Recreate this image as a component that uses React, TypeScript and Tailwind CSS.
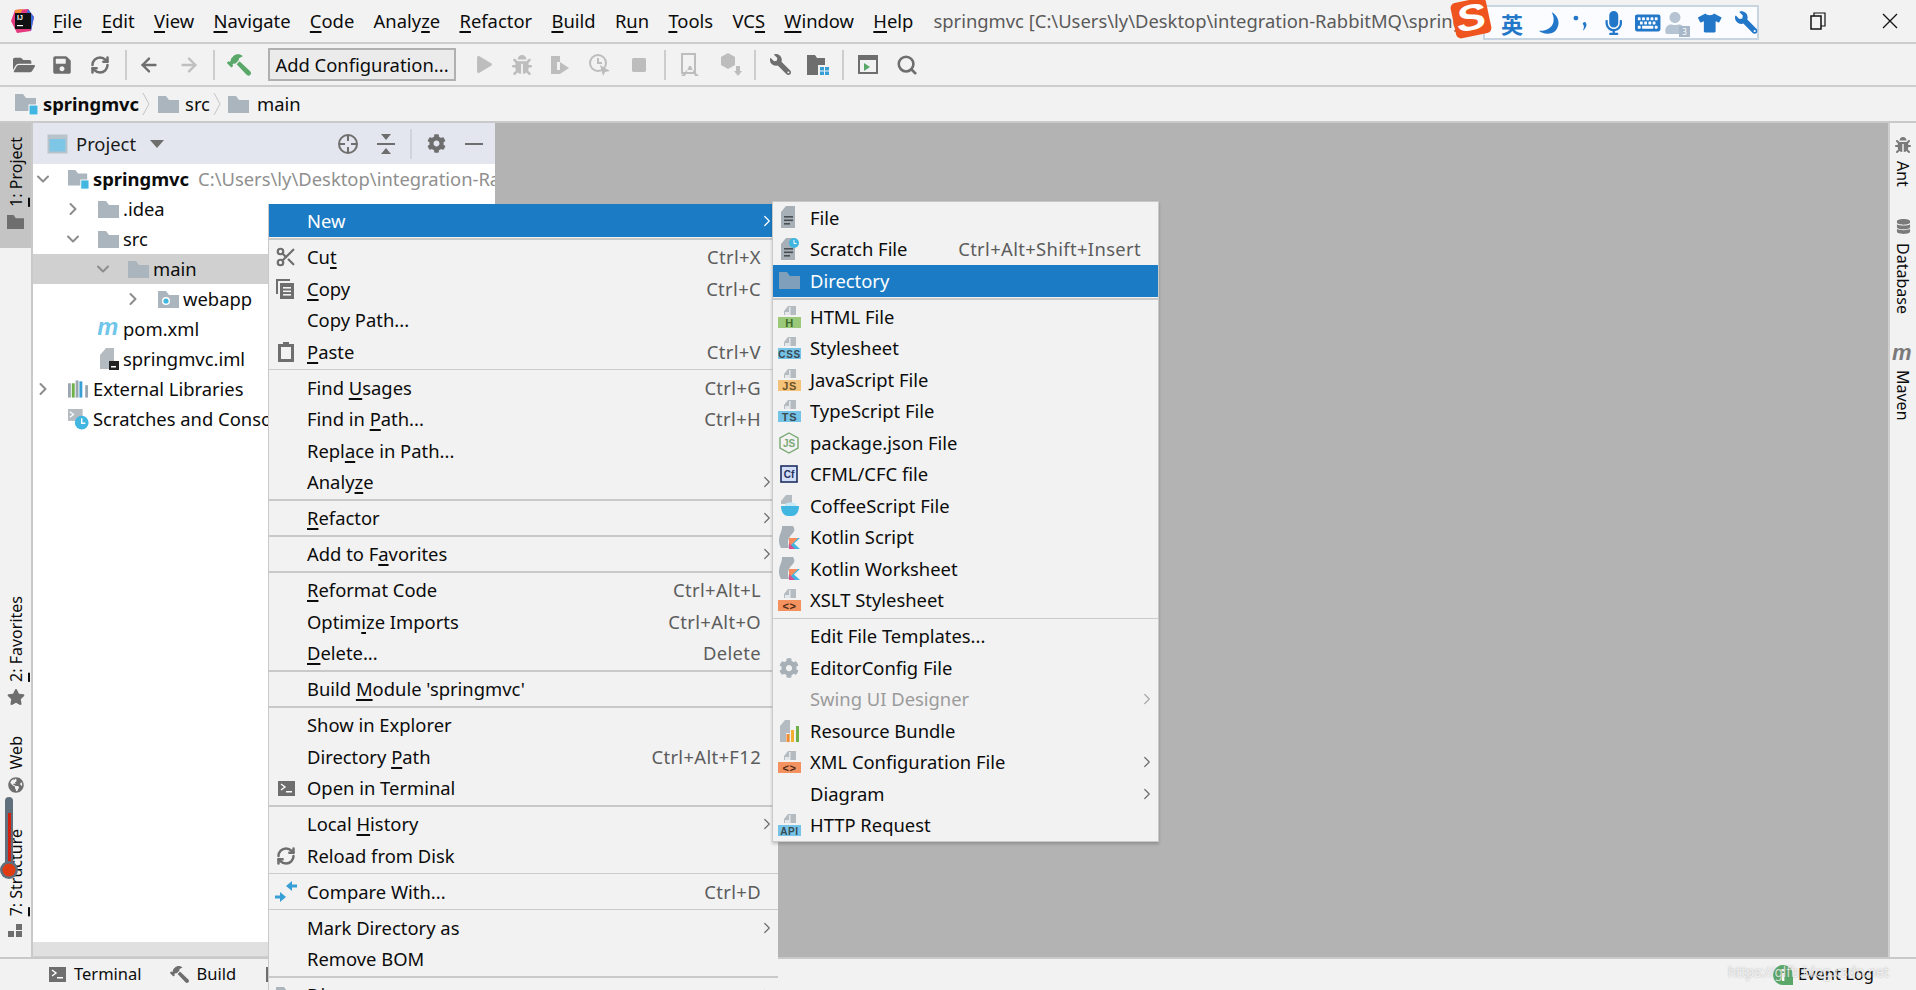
import type { ReactNode } from "react";
import { ArrowLeft, ArrowRight, ChevronDown, ChevronRight, RefreshCw, Scissors, Search } from "lucide-react";
import {
  FaBug,
  FaCog,
  FaDatabase,
  FaFolderOpen,
  FaGlobeAmericas,
  FaHammer,
  FaKeyboard,
  FaMicrophone,
  FaPlay,
  FaSave,
  FaStar,
  FaStop,
  FaTshirt,
  FaUser,
  FaWrench,
} from "react-icons/fa";

type MenuRow = {
  label?: string;
  m?: number;
  sc?: string;
  arrow?: boolean;
  icon?: ReactNode;
  active?: boolean;
  disabled?: boolean;
  sep?: "thin" | "thick";
  tall?: boolean;
};

const Folder = ({ color = "#aab5bd", w = 21, h = 17 }: { color?: string; w?: number; h?: number }) => (
  <svg width={w} height={h} viewBox="0 0 21 17">
    <path d="M0 0H8L11 4H21V17H0Z" fill={color} />
  </svg>
);

const ModuleFolder = () => (
  <svg width="23" height="21" viewBox="0 0 23 21">
    <path d="M0 0H8L11 4H21V17H0Z" fill="#aab5bd" />
    <rect x="14" y="11" width="9" height="10" fill="#40b6e0" stroke="#fff" strokeWidth="1" />
  </svg>
);

const BadgeFile = ({ color, label, ink = "#3a4a52" }: { color: string; label: string; ink?: string }) => (
  <svg width="23" height="22" viewBox="0 0 23 22">
    <path d="M6 9V5L10 0H18V9Z" fill="#b4bcc2" />
    <path d="M7 9V6H11V1H12.5V9Z" fill="#e4e7e9" />
    <rect x="0" y="11" width="23" height="11" fill={color} />
    <text x="11.5" y="20.5" textAnchor="middle" fontSize={label.length > 2 ? 10 : 11} fontWeight="700" letterSpacing="0.6" fill={ink} fontFamily="Liberation Sans, sans-serif">
      {label}
    </text>
  </svg>
);

const PageIcon = ({ clock }: { clock?: boolean }) => (
  <svg width="20" height="23" viewBox="0 0 20 23">
    <path d="M2 6L7 0H16V22H2Z" fill="#a7b0b6" />
    <rect x="5" y="10" width="9" height="1.6" fill="#4a4f52" />
    <rect x="5" y="13.5" width="9" height="1.6" fill="#4a4f52" />
    <rect x="5" y="17" width="6" height="1.6" fill="#4a4f52" />
    {clock && (
      <>
        <circle cx="15" cy="5" r="5" fill="#40b6e0" />
        <path d="M15 2V5.5H17.5" stroke="#fff" strokeWidth="1" fill="none" />
      </>
    )}
  </svg>
);

const CopyIcon = () => (
  <svg width="20" height="20" viewBox="0 0 20 20">
    <path d="M0 0H14V2H2V15H0Z" fill="#6e6e6e" />
    <rect x="4" y="4" width="14" height="16" fill="#6e6e6e" />
    <rect x="7" y="8" width="8" height="1.6" fill="#f2f2f2" />
    <rect x="7" y="11.5" width="8" height="1.6" fill="#f2f2f2" />
    <rect x="7" y="15" width="8" height="1.6" fill="#f2f2f2" />
  </svg>
);

const PasteIcon = () => (
  <svg width="16" height="20" viewBox="0 0 16 20">
    <path d="M5 0H11V2H16V20H0V2H5Z" fill="#6e6e6e" />
    <rect x="3" y="5" width="10" height="12" fill="#f2f2f2" />
  </svg>
);

const TerminalIcon = () => (
  <svg width="17" height="15" viewBox="0 0 17 15">
    <rect width="17" height="15" fill="#6e6e6e" />
    <path d="M3 3L7 6L3 9" stroke="#fff" strokeWidth="1.4" fill="none" />
    <rect x="8" y="10" width="6" height="1.5" fill="#fff" />
  </svg>
);

const CompareIcon = () => (
  <svg width="22" height="21" viewBox="0 0 22 21">
    <path d="M11 5L17 0V3.5H22V6.5H17V10Z" fill="#389fd6" />
    <path d="M11 16L5 21V17.5H0V14.5H5V11Z" fill="#389fd6" />
  </svg>
);

const PackageJsonIcon = () => (
  <svg width="20" height="22" viewBox="0 0 20 22">
    <path d="M10 1L19 6V16L10 21L1 16V6Z" fill="none" stroke="#7aa874" strokeWidth="1.4" />
    <text x="10" y="15" textAnchor="middle" fontSize="10" fontWeight="700" fill="#7aa874" fontFamily="Liberation Sans, sans-serif">
      JS
    </text>
  </svg>
);

const CfIcon = () => (
  <svg width="18" height="18" viewBox="0 0 18 18">
    <rect x="1" y="1" width="16" height="16" fill="#d3dffa" stroke="#1f2f5f" strokeWidth="1.6" />
    <text x="9" y="13" textAnchor="middle" fontSize="10" fontWeight="700" fill="#1f2f5f" fontFamily="Liberation Sans, sans-serif">
      Cf
    </text>
  </svg>
);

const CoffeeIcon = () => (
  <svg width="22" height="22" viewBox="0 0 22 22">
    <path d="M3 6L8 0H14V9H3Z" fill="#b4bcc2" />
    <path d="M3 11H21C21 17 18 21 14 21H10C6 21 3 17 3 11Z" fill="#40b6e0" />
    <path d="M7 9C10 7 15 7 18 9V11H7Z" fill="#c8e9f5" />
  </svg>
);

const KotlinIcon = () => (
  <svg width="22" height="23" viewBox="0 0 22 23">
    <path d="M4 0H15C17 3 17 5 14 8C10 12 9 16 11 22H3C-1 15 2 9 3 6C4 3 4 2 4 0Z" fill="#a7b0b6" />
    <path d="M11 23V12H22L16 17.5L22 23Z" fill="#40b6e0" />
    <path d="M11 12H20L11 21Z" fill="#f98b5d" />
    <path d="M11 23V17L14 20L17 23Z" fill="#d74f8f" />
  </svg>
);

const ResourceIcon = () => (
  <svg width="22" height="22" viewBox="0 0 22 22">
    <path d="M2 6L7 0H12V22H2Z" fill="#b4bcc2" />
    <rect x="8" y="13" width="3.5" height="9" fill="#f2f2f2" />
    <rect x="8.5" y="14" width="3" height="8" fill="#f28c2e" />
    <rect x="13" y="10" width="3" height="12" fill="#f2b02e" />
    <rect x="18" y="6" width="3" height="16" fill="#6fb04a" />
  </svg>
);

const IntellijLogo = () => (
  <svg width="23" height="24" viewBox="0 0 23 24">
    <path d="M4 1L17 0L23 8L20 22L6 24L0 12Z" fill="#e5397f" />
    <path d="M4 1L12 0L4 14Z" fill="#f48c3a" />
    <path d="M17 0L23 8L20 22L14 10Z" fill="#3a6fe0" />
    <rect x="4" y="4" width="16" height="16" fill="#111" />
    <text x="6" y="11" fontSize="7" fontWeight="700" fill="#fff" fontFamily="Liberation Sans, sans-serif">
      IJ
    </text>
    <rect x="6" y="16" width="6" height="1.2" fill="#fff" />
  </svg>
);

const mainMenu: MenuRow[] = [
  { label: "New", arrow: true, active: true, tall: true },
  { sep: "thick" },
  { label: "Cut", m: 2, sc: "Ctrl+X", icon: <Scissors size={22} color="#6e6e6e" strokeWidth={2.4} /> },
  { label: "Copy", m: 0, sc: "Ctrl+C", icon: <CopyIcon /> },
  { label: "Copy Path..." },
  { label: "Paste", m: 0, sc: "Ctrl+V", icon: <PasteIcon /> },
  { sep: "thin" },
  { label: "Find Usages", m: 5, sc: "Ctrl+G" },
  { label: "Find in Path...", m: 8, sc: "Ctrl+H" },
  { label: "Replace in Path...", m: 4 },
  { label: "Analyze", m: 5, arrow: true },
  { sep: "thick" },
  { label: "Refactor", m: 0, arrow: true },
  { sep: "thick" },
  { label: "Add to Favorites", m: 8, arrow: true },
  { sep: "thick" },
  { label: "Reformat Code", m: 0, sc: "Ctrl+Alt+L" },
  { label: "Optimize Imports", m: 5, sc: "Ctrl+Alt+O" },
  { label: "Delete...", m: 0, sc: "Delete" },
  { sep: "thick" },
  { label: "Build Module 'springmvc'", m: 6 },
  { sep: "thick" },
  { label: "Show in Explorer" },
  { label: "Directory Path", m: 10, sc: "Ctrl+Alt+F12" },
  { label: "Open in Terminal", icon: <TerminalIcon /> },
  { sep: "thick" },
  { label: "Local History", m: 6, arrow: true },
  { label: "Reload from Disk", icon: <RefreshCw size={20} color="#6e6e6e" strokeWidth={3} /> },
  { sep: "thin" },
  { label: "Compare With...", sc: "Ctrl+D", icon: <CompareIcon /> },
  { sep: "thin" },
  { label: "Mark Directory as", arrow: true },
  { label: "Remove BOM" },
  { sep: "thick" },
  { label: "Diagrams", arrow: true, icon: <Folder /> },
];

const subMenu: MenuRow[] = [
  { label: "File", icon: <PageIcon /> },
  { label: "Scratch File", sc: "Ctrl+Alt+Shift+Insert", icon: <PageIcon clock /> },
  { label: "Directory", active: true, icon: <Folder color="#7f9fbb" /> },
  { sep: "thick" },
  { label: "HTML File", icon: <BadgeFile color="#9ac97a" label="H" ink="#3d6b2c" /> },
  { label: "Stylesheet", icon: <BadgeFile color="#75c4e8" label="CSS" /> },
  { label: "JavaScript File", icon: <BadgeFile color="#f5c27a" label="JS" ink="#6b5127" /> },
  { label: "TypeScript File", icon: <BadgeFile color="#75c4e8" label="TS" /> },
  { label: "package.json File", icon: <PackageJsonIcon /> },
  { label: "CFML/CFC file", icon: <CfIcon /> },
  { label: "CoffeeScript File", icon: <CoffeeIcon /> },
  { label: "Kotlin Script", icon: <KotlinIcon /> },
  { label: "Kotlin Worksheet", icon: <KotlinIcon /> },
  { label: "XSLT Stylesheet", icon: <BadgeFile color="#f3915f" label="<>" ink="#4a2a18" /> },
  { sep: "thin" },
  { label: "Edit File Templates..." },
  { label: "EditorConfig File", icon: <FaCog size={20} color="#a7b0b6" /> },
  { label: "Swing UI Designer", disabled: true, arrow: true },
  { label: "Resource Bundle", icon: <ResourceIcon /> },
  { label: "XML Configuration File", arrow: true, icon: <BadgeFile color="#f3915f" label="<>" ink="#4a2a18" /> },
  { label: "Diagram", arrow: true },
  { label: "HTTP Request", icon: <BadgeFile color="#75c4e8" label="API" /> },
];

// puts the underline under the mnemonic letter
const Mnemonic = ({ text, at }: { text: string; at?: number }) => {
  if (at === undefined) return <>{text}</>;
  return (
    <>
      {text.slice(0, at)}
      <span className="underline decoration-[1.5px] underline-offset-[3px]">{text[at]}</span>
      {text.slice(at + 1)}
    </>
  );
};

const Menu = ({ rows, slot, labelGap }: { rows: MenuRow[]; slot: string; labelGap: string }) => (
  <>
    {rows.map((row, i) => {
      if (row.sep) {
        return (
          <div key={i} className="h-[4.5px] flex items-center">
            <div className={row.sep === "thick" ? "h-[2px] w-full bg-[#c9c9c9]" : "h-px w-full bg-[#cbcbcb]"} />
          </div>
        );
      }
      const tone = row.active ? "bg-[#1b7bc4] text-white" : row.disabled ? "text-[#9b9b9b]" : "text-[#0c0c0c]";
      return (
        <div key={i} className={`flex items-center ${row.tall ? "h-[33px]" : "h-[31.5px]"} ${tone}`}>
          <div className={`${slot} flex items-center justify-center shrink-0`}>{row.icon}</div>
          <span className={`${labelGap} whitespace-nowrap`}>
            <Mnemonic text={row.label ?? ""} at={row.m} />
          </span>
          {row.sc && <span className="ml-auto mr-[17px] text-[#5c5c5c] tracking-[0.35px] whitespace-nowrap">{row.sc}</span>}
          {row.arrow && (
            <ChevronRight size={18} strokeWidth={1.6} color={row.active ? "#ffffff" : row.disabled ? "#a8a8a8" : "#6e6e6e"} className="ml-auto mr-[2px]" />
          )}
        </div>
      );
    })}
  </>
);

const menuBar: [string, number][] = [
  ["File", 0],
  ["Edit", 0],
  ["View", 0],
  ["Navigate", 0],
  ["Code", 0],
  ["Analyze", 5],
  ["Refactor", 0],
  ["Build", 0],
  ["Run", 1],
  ["Tools", 0],
  ["VCS", 2],
  ["Window", 0],
  ["Help", 0],
];

const TitleBar = () => (
  <div className="h-[42px] flex items-center shrink-0 bg-[#f2f2f2]">
    <div className="w-[53px] pl-[11px] shrink-0">
      <IntellijLogo />
    </div>
    <div className="flex gap-[19.3px] text-[#0c0c0c]">
      {menuBar.map(([name, m]) => (
        <span key={name}>
          <Mnemonic text={name} at={m} />
        </span>
      ))}
    </div>
    <span className="ml-[20px] w-[525px] overflow-hidden whitespace-nowrap text-[#5a5a5a]">
      springmvc [C:\Users\ly\Desktop\integration-RabbitMQ\springmvc] - IntelliJ IDEA
    </span>
    <div className="ml-auto flex items-center">
      <svg width="16" height="18" viewBox="0 0 16 18" className="mr-[56px]">
        <rect x="1" y="4" width="10" height="13" fill="none" stroke="#111" strokeWidth="1.5" />
        <path d="M4 4V1H15V14H11" fill="none" stroke="#111" strokeWidth="1.2" />
      </svg>
      <svg width="16" height="16" viewBox="0 0 16 16" className="mr-[18px]">
        <path d="M1 1L15 15M15 1L1 15" stroke="#111" strokeWidth="1.3" />
      </svg>
    </div>
  </div>
);

const ToolSep = ({ cls }: { cls: string }) => <div className={`w-[2px] h-[30px] bg-[#cdcdcd] shrink-0 ${cls}`} />;

const Tool = ({ w, children }: { w: string; children: ReactNode }) => (
  <div className={`${w} flex items-center justify-center shrink-0`}>{children}</div>
);

const Toolbar = () => (
  <div className="h-[41px] flex items-center pl-[5px] shrink-0 bg-[#f2f2f2] border-t-[2px] border-b-[2px] border-[#cdcdcd] box-content">
    <Tool w="w-[38px]"><FaFolderOpen size={22} color="#6e6e6e" /></Tool>
    <Tool w="w-[38px]"><FaSave size={20} color="#6e6e6e" /></Tool>
    <Tool w="w-[38px]"><RefreshCw size={20} color="#6e6e6e" strokeWidth={3} /></Tool>
    <ToolSep cls="mx-[6px]" />
    <Tool w="w-[32px]"><ArrowLeft size={22} color="#6e6e6e" strokeWidth={2.6} /></Tool>
    <Tool w="w-[48px]"><ArrowRight size={22} color="#c0c0c0" strokeWidth={2.6} /></Tool>
    <ToolSep cls="" />
    <Tool w="w-[48px]"><FaHammer size={24} color="#59a869" className="-scale-x-100" /></Tool>
    <div className="ml-[5px] w-[188px] h-[33px] border-2 border-[#b0b0b0] bg-[#ebebeb] flex items-center justify-center text-[#0c0c0c] shrink-0">
      Add Configuration...
    </div>
    <div className="w-[9px] shrink-0" />
    <Tool w="w-[38px]"><FaPlay size={17} color="#bdbdbd" /></Tool>
    <Tool w="w-[38px]"><FaBug size={20} color="#bdbdbd" /></Tool>
    <Tool w="w-[38px]">
      <svg width="22" height="22" viewBox="0 0 22 22">
        <path d="M2 2H11V8H8V16H11V20H2Z" fill="#bdbdbd" />
        <path d="M11 8L20 14L11 20Z" fill="#bdbdbd" />
      </svg>
    </Tool>
    <Tool w="w-[42px]">
      <svg width="24" height="24" viewBox="0 0 24 24">
        <circle cx="10" cy="10" r="8" fill="none" stroke="#bdbdbd" strokeWidth="2" />
        <path d="M10 5V10H14" stroke="#bdbdbd" strokeWidth="2" fill="none" />
        <path d="M12 12L22 18L17 19L15 23Z" fill="#bdbdbd" />
      </svg>
    </Tool>
    <Tool w="w-[36px]"><FaStop size={16} color="#bdbdbd" /></Tool>
    <ToolSep cls="ml-[7px]" />
    <Tool w="w-[47px]">
      <svg width="22" height="24" viewBox="0 0 22 24">
        <rect x="3" y="1" width="13" height="19" fill="none" stroke="#bdbdbd" strokeWidth="2" />
        <path d="M6 23L10 13L12 13L16 23H20L14 17H8L2 23Z" fill="#bdbdbd" />
      </svg>
    </Tool>
    <Tool w="w-[36px]">
      <svg width="22" height="24" viewBox="0 0 22 24">
        <path d="M8 0L15 4V12L8 16L1 12V4Z" fill="#bdbdbd" />
        <path d="M16 13H20V18H22L18 23L14 18H16Z" fill="#bdbdbd" />
      </svg>
    </Tool>
    <ToolSep cls="ml-[5px]" />
    <Tool w="w-[48px]"><FaWrench size={21} color="#6e6e6e" className="-scale-x-100" /></Tool>
    <Tool w="w-[28px]">
      <svg width="22" height="20" viewBox="0 0 22 20">
        <path d="M0 0H8L10 3H18V10H11V20H0Z" fill="#6e6e6e" />
        <rect x="13" y="12" width="4" height="3.5" fill="#389fd6" />
        <rect x="18" y="12" width="4" height="3.5" fill="#389fd6" />
        <rect x="13" y="16.5" width="4" height="3.5" fill="#389fd6" />
        <rect x="18" y="16.5" width="4" height="3.5" fill="#389fd6" />
      </svg>
    </Tool>
    <ToolSep cls="ml-[10px]" />
    <Tool w="w-[48px]">
      <svg width="20" height="19" viewBox="0 0 20 19">
        <rect x="1" y="1" width="18" height="17" fill="none" stroke="#6e6e6e" strokeWidth="2" />
        <rect x="1" y="1" width="18" height="4" fill="#6e6e6e" />
        <path d="M6 8L12 12L6 16Z" fill="#59a869" />
      </svg>
    </Tool>
    <Tool w="w-[30px]"><Search size={22} color="#6e6e6e" strokeWidth={2.8} /></Tool>
  </div>
);

const CrumbSep = () => (
  <svg width="8" height="24" viewBox="0 0 8 24" className="shrink-0">
    <path d="M1 1L7 12L1 23" fill="none" stroke="#c4c4c4" strokeWidth="1" />
  </svg>
);

const Breadcrumb = () => (
  <div className="h-[34px] flex items-center pl-[15px] shrink-0 bg-[#f2f2f2] text-[#0c0c0c]">
    <ModuleFolder />
    <span className="ml-[5px] font-bold">springmvc</span>
    <div className="ml-[3px] mr-[8px]"><CrumbSep /></div>
    <Folder />
    <span className="ml-[6px]">src</span>
    <div className="ml-[3px] mr-[7px]"><CrumbSep /></div>
    <Folder />
    <span className="ml-[8px]">main</span>
  </div>
);

const ToolTabLeft = ({ text, m, icon, cls }: { text: string; m?: number; icon: ReactNode; cls?: string }) => (
  <div className={`flex flex-col items-center ${cls ?? ""}`}>
    <span className="[writing-mode:vertical-rl] rotate-180 text-[16px] text-[#0c0c0c] whitespace-nowrap leading-none">
      <Mnemonic text={text} at={m} />
    </span>
    <div className="mt-[6px] h-[18px] flex items-center">{icon}</div>
  </div>
);

const LeftStrip = () => (
  <div className="w-[33px] shrink-0 bg-[#f2f2f2] border-r-[2px] border-[#c9c9c9] flex flex-col justify-between">
    <div className="h-[125px] bg-[#c4c4c4] pt-[14px]">
      <ToolTabLeft text="1: Project" m={0} icon={<Folder color="#6e6e6e" w={17} h={14} />} />
    </div>
    <div className="pb-[17px] flex flex-col">
      <ToolTabLeft text="2: Favorites" m={0} icon={<FaStar size={18} color="#6e6e6e" />} />
      <ToolTabLeft text="Web" icon={<FaGlobeAmericas size={16} color="#6e6e6e" />} cls="mt-[30px]" />
      <ToolTabLeft
        text="7: Structure"
        m={0}
        cls="mt-[35px]"
        icon={
          <svg width="15" height="14" viewBox="0 0 15 14">
            <rect x="8" y="0" width="6" height="6" fill="#6e6e6e" />
            <rect x="0" y="7" width="6" height="6" fill="#6e6e6e" />
            <rect x="8" y="7" width="6" height="6" fill="#6e6e6e" />
          </svg>
        }
      />
    </div>
  </div>
);

const TreeRow = ({
  pad,
  open,
  icon,
  iconW = "w-[21px]",
  selected,
  children,
}: {
  pad: string;
  open?: boolean | null;
  icon: ReactNode;
  iconW?: string;
  selected?: boolean;
  children: ReactNode;
}) => (
  <div className={`h-[30px] flex items-center whitespace-nowrap ${pad} ${selected ? "bg-[#d0d0d0]" : ""}`}>
    <div className="w-[35px] shrink-0 flex items-center">
      {open === true && <ChevronDown size={20} color="#8c8c8c" strokeWidth={2.4} />}
      {open === false && <ChevronRight size={20} color="#8c8c8c" strokeWidth={2.4} />}
    </div>
    <div className={`${iconW} shrink-0 flex items-center justify-center`}>{icon}</div>
    <div className="ml-[4px] text-[#0c0c0c]">{children}</div>
  </div>
);

const Tree = () => (
  <div className="flex-1 min-h-0 overflow-hidden bg-white">
    <TreeRow pad="pl-0" open={true} icon={<ModuleFolder />}>
      <span className="font-bold">springmvc</span>
      <span className="ml-[9px] text-[#8f8f8f]">C:\Users\ly\Desktop\integration-RabbitMQ\springmvc</span>
    </TreeRow>
    <TreeRow pad="pl-[30px]" open={false} icon={<Folder />}>.idea</TreeRow>
    <TreeRow pad="pl-[30px]" open={true} icon={<Folder />}>src</TreeRow>
    <TreeRow pad="pl-[60px]" open={true} icon={<Folder />} selected>main</TreeRow>
    <TreeRow
      pad="pl-[90px]"
      open={false}
      icon={
        <svg width="21" height="17" viewBox="0 0 21 17">
          <path d="M0 0H8L11 4H21V17H0Z" fill="#aab5bd" />
          <circle cx="8" cy="10" r="4" fill="#fff" />
          <circle cx="8" cy="10" r="2.6" fill="#40b6e0" />
        </svg>
      }
    >
      webapp
    </TreeRow>
    <TreeRow
      pad="pl-[30px]"
      open={null}
      icon={
        <svg width="24" height="18" viewBox="0 0 24 18">
          <text x="-1" y="16" fontSize="27" fontWeight="700" fontStyle="italic" fill="#6fc6ea" fontFamily="Liberation Sans, sans-serif">
            m
          </text>
        </svg>
      }
    >
      pom.xml
    </TreeRow>
    <TreeRow
      pad="pl-[30px]"
      open={null}
      icon={
        <svg width="20" height="22" viewBox="0 0 20 22">
          <path d="M1 7L7 0H15V21H1Z" fill="#b4bcc2" />
          <rect x="10" y="13" width="10" height="9" fill="#222" />
          <rect x="12" y="18" width="5" height="1.5" fill="#fff" />
        </svg>
      }
    >
      springmvc.iml
    </TreeRow>
    <TreeRow
      pad="pl-0"
      open={false}
      icon={
        <svg width="22" height="18" viewBox="0 0 22 18">
          <rect x="0" y="3" width="3" height="15" fill="#9aa7b0" />
          <rect x="4" y="3" width="3" height="15" fill="#6fb04a" />
          <rect x="8" y="0" width="3" height="18" fill="#9aa7b0" />
          <rect x="12" y="1" width="3" height="17" fill="#389fd6" />
          <rect x="18" y="5" width="3" height="13" fill="#9aa7b0" />
        </svg>
      }
    >
      External Libraries
    </TreeRow>
    <TreeRow
      pad="pl-0"
      open={null}
      icon={
        <svg width="23" height="23" viewBox="0 0 23 23">
          <rect x="0" y="0" width="16" height="13" fill="#b4bcc2" />
          <path d="M2 3L6 6L2 9" stroke="#fff" strokeWidth="1.4" fill="none" />
          <circle cx="15" cy="15" r="7.5" fill="#40b6e0" />
          <path d="M15 10V15.5H19" stroke="#fff" strokeWidth="1.6" fill="none" />
        </svg>
      }
    >
      Scratches and Consoles
    </TreeRow>
  </div>
);

const ProjectPanel = () => (
  <div className="w-[462px] shrink-0 flex flex-col bg-white">
    <div className="h-[41px] shrink-0 bg-[#e3e6ee] flex items-center pl-[14px] text-[#1a1a1a]">
      <svg width="21" height="20" viewBox="0 0 21 20">
        <rect x="0.5" y="0.5" width="20" height="19" fill="#b9c3cb" />
        <rect x="2.5" y="5" width="16" height="12.5" fill="#7ec6e6" />
      </svg>
      <span className="ml-[8px]">Project</span>
      <svg width="14" height="8" viewBox="0 0 14 8" className="ml-[14px] shrink-0">
        <path d="M0 0H14L7 8Z" fill="#6e6e6e" />
      </svg>
      <div className="ml-[173px] flex items-center">
        <svg width="22" height="22" viewBox="0 0 22 22">
          <circle cx="11" cy="11" r="9" fill="none" stroke="#6e6e6e" strokeWidth="2" />
          <path d="M11 2V8M11 14V20M2 11H8M14 11H20" stroke="#6e6e6e" strokeWidth="2" />
        </svg>
        <svg width="20" height="20" viewBox="0 0 20 20" className="ml-[17px]">
          <path d="M5 0H15L10 6ZM5 20H15L10 14Z" fill="#6e6e6e" />
          <rect x="1" y="9" width="18" height="2" fill="#6e6e6e" />
        </svg>
        <div className="ml-[14px] w-[2px] h-[30px] bg-[#d0d3da]" />
        <FaCog size={19} color="#6e6e6e" className="ml-[15px]" />
        <div className="ml-[19px] w-[18px] h-[2px] bg-[#6e6e6e]" />
      </div>
    </div>
    <Tree />
    <div className="h-[15px] shrink-0 bg-[#e0e0e0] border-b border-[#cfcfcf]" />
  </div>
);

const RightTab = ({ text, icon, cls }: { text: string; icon: ReactNode; cls?: string }) => (
  <div className={`flex flex-col items-center ${cls ?? ""}`}>
    <div className="h-[18px] flex items-center">{icon}</div>
    <span className="mt-[7px] [writing-mode:vertical-rl] text-[16px] text-[#0c0c0c] whitespace-nowrap leading-none">{text}</span>
  </div>
);

const RightStrip = () => (
  <div className="w-[28px] shrink-0 bg-[#f2f2f2] border-l-[2px] border-[#cfcfcf] pt-[13px] flex flex-col">
    <RightTab text="Ant" icon={<FaBug size={16} color="#7a7a7a" />} />
    <RightTab text="Database" icon={<FaDatabase size={15} color="#7a7a7a" />} cls="mt-[31px]" />
    <RightTab
      text="Maven"
      cls="mt-[31px]"
      icon={
        <svg width="22" height="16" viewBox="0 0 22 16">
          <text x="0" y="14" fontSize="22" fontWeight="700" fontStyle="italic" fill="#7a7a7a" fontFamily="Liberation Sans, sans-serif">
            m
          </text>
        </svg>
      }
    />
  </div>
);

const StatusBar = () => (
  <div className="h-[33px] shrink-0 bg-[#f2f2f2] border-t-[2px] border-[#c9c9c9] flex items-center text-[16.5px] text-[#0c0c0c] pl-[49px]">
    <TerminalIcon />
    <span className="ml-[8px]">Terminal</span>
    <FaHammer size={19} color="#6e6e6e" className="ml-[28px] -scale-x-100" />
    <span className="ml-[8px]">Build</span>
    <div className="ml-[30px] w-[8px] h-[15px] bg-[#6e6e6e]" />
    <div className="ml-auto mr-[42px] flex items-center">
      <svg width="20" height="20" viewBox="0 0 20 20">
        <path d="M10 0A10 10 0 1 0 10 20H20V10A10 10 0 0 0 10 0Z" fill="#59a869" />
        <rect x="9" y="4" width="2.4" height="2.4" fill="#fff" />
        <rect x="9" y="8" width="2.4" height="8" fill="#fff" />
      </svg>
      <span className="ml-[5px]">Event Log</span>
    </div>
  </div>
);

const SogouBar = () => (
  <div className="absolute left-[1453px] top-0 h-[42px] w-[306px] flex items-start">
    <div className="absolute left-[30px] right-0 top-[5px] h-[35px] bg-[#fafcff] border-2 border-[#c8d4e0] flex items-center text-[#2277c8]">
      <span className="ml-[16px] w-[26px] text-[22px] font-bold leading-none [font-family:'Noto_Sans_CJK_SC',sans-serif]">英</span>
      <svg width="22" height="24" viewBox="0 0 22 24" className="ml-[12px]">
        <path d="M14 1C18 8 17 20 1 20C5 24 20 26 21 12C21 7 18 3 14 1Z" fill="#2277c8" />
      </svg>
      <svg width="16" height="20" viewBox="0 0 16 20" className="ml-[13px]">
        <circle cx="3" cy="5" r="2.5" fill="#2277c8" />
        <path d="M12 9C15 10 14 15 10 18C12 14 11 12 10 11C10 10 11 9 12 9Z" fill="#2277c8" />
      </svg>
      <FaMicrophone size={24} className="ml-[13px]" />
      <FaKeyboard size={26} className="ml-[10px]" />
      <div className="relative ml-[3px] w-[24px] flex justify-center">
        <FaUser size={22} color="#b5c3d3" />
        <span className="absolute right-[-3px] bottom-[-3px] w-[11px] h-[11px] bg-[#a9b8c9] text-white text-[8px] leading-[11px] text-center">3</span>
      </div>
      <FaTshirt size={24} className="ml-[11px]" />
      <FaWrench size={23} className="ml-[13px] -scale-x-100" />
    </div>
    <div className="absolute left-0 top-0 w-[36px] h-[36px] -rotate-12 rounded-[5px] bg-[#f0541e] flex items-center justify-center">
      <span className="text-white text-[36px] font-black italic leading-none scale-x-125 [font-family:'Liberation_Sans',sans-serif]">S</span>
    </div>
  </div>
);

const Thermometer = () => (
  <svg width="20" height="95" viewBox="0 0 20 95" className="absolute left-0 top-[795px]">
    <rect x="5" y="2" width="8" height="70" rx="4" fill="#5f6f7c" />
    <rect x="8" y="18" width="3" height="60" fill="#d4200f" />
    <circle cx="9" cy="75" r="9" fill="#5f6f7c" />
    <circle cx="9" cy="75" r="6.5" fill="#e03c14" />
  </svg>
);

export default function App() {
  return (
    <div className="relative w-[1916px] h-[990px] overflow-hidden flex flex-col bg-[#f2f2f2] text-[18.4px] [font-family:'Noto_Sans','Noto_Sans_CJK_SC',sans-serif]">
      <TitleBar />
      <Toolbar />
      <Breadcrumb />
      <div className="flex flex-1 min-h-0 border-t-[2px] border-[#c9c9c9]">
        <LeftStrip />
        <ProjectPanel />
        <div className="flex-1 bg-[#b3b3b3]" />
        <RightStrip />
      </div>
      <StatusBar />

      <Thermometer />
      <SogouBar />

      <span className="absolute left-[1728px] top-[962px] text-[13.5px] text-white/70 [text-shadow:0_0_2px_rgba(120,120,120,0.6)] whitespace-nowrap">https://glfb.blog.csdn.net</span>

      {/* context menu */}
      <div className="absolute left-[268px] top-[204px] w-[510px] bg-[#f2f2f2] border-l border-[#c9c9c9]">
        <Menu rows={mainMenu} slot="w-[34px]" labelGap="ml-[4px]" />
      </div>

      {/* New submenu */}
      <div className="absolute left-[772px] top-[201px] w-[387px] bg-[#f2f2f2] border border-[#c9c9c9] shadow-[0_2px_3px_rgba(0,0,0,0.2)]">
        <Menu rows={subMenu} slot="w-[32px]" labelGap="ml-[5px]" />
      </div>
    </div>
  );
}
